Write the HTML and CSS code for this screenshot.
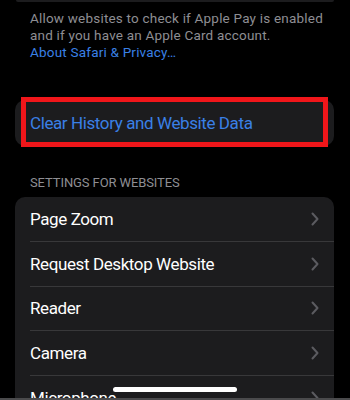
FILE: index.html
```html
<!DOCTYPE html>
<html>
<head>
<meta charset="utf-8">
<link rel="stylesheet" href="styles.css">
</head>
<body>
<div class="screen">
  <div class="card-tail"></div>
  <p class="footer">Allow websites to check if Apple Pay is enabled<br>and if you have an Apple Card account.<br><span class="link">About Safari &amp; Privacy…</span></p>

  <div class="card action-card">
    <div class="action">Clear History and Website Data</div>
    <div class="highlight"></div>
  </div>

  <div class="header">SETTINGS FOR WEBSITES</div>
  <div class="card list">
    <div class="row"><span class="label">Page Zoom</span><svg class="chev" viewBox="0 0 8 14"><path d="M1.5 1.5 L6.5 7 L1.5 12.5" /></svg></div>
    <div class="row"><span class="label">Request Desktop Website</span><svg class="chev" viewBox="0 0 8 14"><path d="M1.5 1.5 L6.5 7 L1.5 12.5" /></svg></div>
    <div class="row"><span class="label">Reader</span><svg class="chev" viewBox="0 0 8 14"><path d="M1.5 1.5 L6.5 7 L1.5 12.5" /></svg></div>
    <div class="row"><span class="label">Camera</span><svg class="chev" viewBox="0 0 8 14"><path d="M1.5 1.5 L6.5 7 L1.5 12.5" /></svg></div>
    <div class="row"><span class="label">Microphone</span><svg class="chev" viewBox="0 0 8 14"><path d="M1.5 1.5 L6.5 7 L1.5 12.5" /></svg></div>
  </div>
  <div class="home-indicator"></div>
  <div class="bottom-edge"></div>
</div>
</body>
</html>
```
FILE: styles.css
```css
html, body {
  margin: 0;
  padding: 0;
  background: #000;
}
body {
  font-family: Roboto, "Liberation Sans", sans-serif;
  -webkit-font-smoothing: antialiased;
}
.screen {
  position: relative;
  width: 350px;
  height: 400px;
  overflow: hidden;
  background: #000;
}
.card-tail {
  height: 2px;
  margin: 0 16px 0 16px;
  background: #1c1c1e;
  border-radius: 0 0 4px 4px;
}
.footer {
  margin: 8px 20px 0 30px;
  font-size: 13.5px;
  line-height: 17px;
  letter-spacing: 0.2px;
  color: #8e8e93;
  white-space: nowrap;
}
.link {
  color: #3a80e6;
}
.card {
  background: #1c1c1e;
  margin-left: 15px;
  margin-right: 16px;
  border-radius: 10px;
}
.action-card {
  position: relative;
  margin-top: 39px;
  height: 46px;
  display: flex;
  align-items: center;
}
.action {
  padding-left: 15px;
  color: #3a80e6;
  font-size: 17px;
  letter-spacing: -0.4px;
}
.highlight {
  position: absolute;
  left: 6px;
  top: -3px;
  width: 297px;
  height: 40px;
  border: 5px solid #f0161a;
}
.header {
  margin: 29px 30px 6px 30px;
  font-size: 13px;
  line-height: 16px;
  letter-spacing: -0.1px;
  color: #8e8e93;
}
.list {
  border-radius: 10px 10px 0 0;
}
.row {
  height: 44.75px;
  margin-left: 15px;
  padding-right: 15px;
  display: flex;
  align-items: center;
  justify-content: space-between;
  border-bottom: 0.5px solid #38383a;
  box-sizing: border-box;
}
.label {
  color: #fff;
  font-size: 17px;
  letter-spacing: -0.4px;
}
.chev {
  width: 8px;
  height: 14px;
  fill: none;
  stroke: #5b5b60;
  stroke-width: 2;
  stroke-linecap: round;
  stroke-linejoin: round;
}
.home-indicator {
  position: absolute;
  left: 113px;
  top: 387px;
  width: 124px;
  height: 5px;
  background: #fff;
  border-radius: 3px;
}
.bottom-edge {
  position: absolute;
  left: 0;
  right: 0;
  bottom: 0;
  height: 2px;
  background: #4a4a4c;
}
```
